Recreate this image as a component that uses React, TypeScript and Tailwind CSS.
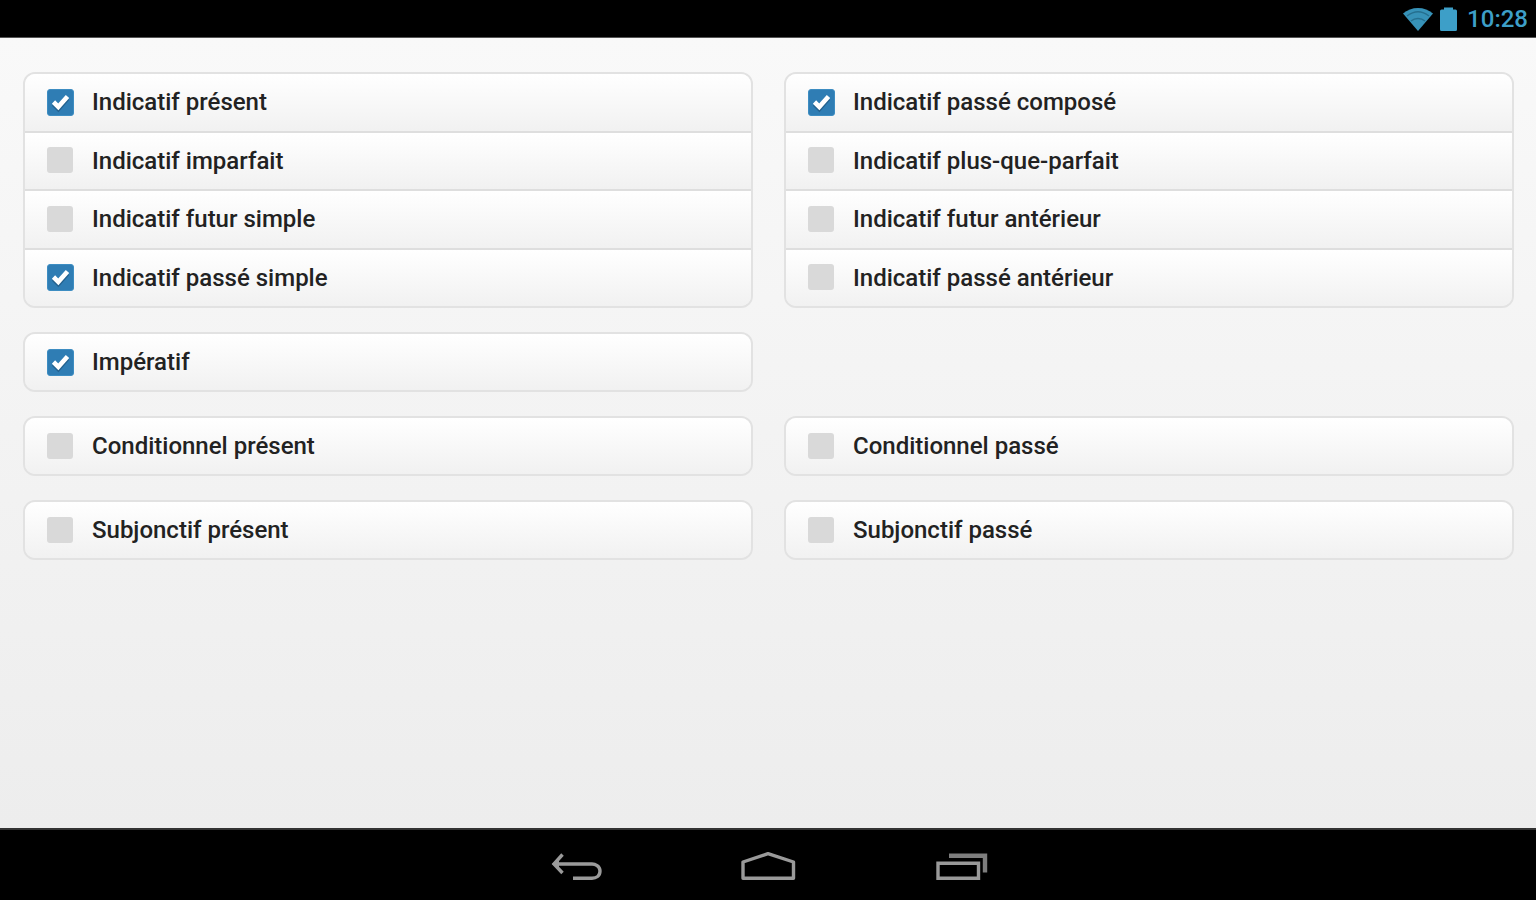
import { useState } from "react";

type Tense = { id: string; label: string };

const rows: (Tense[] | null)[] = [
  [
    { id: "ind-present", label: "Indicatif présent" },
    { id: "ind-imparfait", label: "Indicatif imparfait" },
    { id: "ind-futur", label: "Indicatif futur simple" },
    { id: "ind-passe-simple", label: "Indicatif passé simple" },
  ],
  [
    { id: "ind-passe-compose", label: "Indicatif passé composé" },
    { id: "ind-plus-que-parfait", label: "Indicatif plus-que-parfait" },
    { id: "ind-futur-anterieur", label: "Indicatif futur antérieur" },
    { id: "ind-passe-anterieur", label: "Indicatif passé antérieur" },
  ],
  [{ id: "imperatif", label: "Impératif" }],
  null,
  [{ id: "cond-present", label: "Conditionnel présent" }],
  [{ id: "cond-passe", label: "Conditionnel passé" }],
  [{ id: "subj-present", label: "Subjonctif présent" }],
  [{ id: "subj-passe", label: "Subjonctif passé" }],
];

const initial = ["ind-present", "ind-passe-simple", "ind-passe-compose", "imperatif"];

function StatusBar() {
  return (
    <header className="flex h-[38px] shrink-0 items-center justify-end border-b border-[#555] bg-black pr-2 text-[#3d9fc8]">
      <svg className="mr-[6px] h-6 w-8" viewBox="0 0 32 24" aria-label="Wi-Fi">
        <path d="M1 6.5C9 -1 23 -1 31 6.5L16 24Z" fill="#3792b8" />
        <path d="M5 9C12 3.5 20 3.5 27 9" fill="none" stroke="#256f8f" strokeWidth="1.5" />
        <path d="M9 14C13 10.5 19 10.5 23 14" fill="none" stroke="#256f8f" strokeWidth="1.5" />
      </svg>
      <svg className="mr-[10px] h-6 w-[17px]" viewBox="0 0 17 24" fill="currentColor" aria-label="Batterie">
        <path d="M4 0.5H13V2.5H15.5Q17 2.5 17 4V22.5Q17 24 15.5 24H1.5Q0 24 0 22.5V4Q0 2.5 1.5 2.5H4Z" />
      </svg>
      <time className="text-[24px] leading-[36px] font-medium">10:28</time>
    </header>
  );
}

function TenseOption({ tense, checked, onToggle }: { tense: Tense; checked: boolean; onToggle: () => void }) {
  return (
    <label
      htmlFor={tense.id}
      className="box-content flex min-h-14 flex-1 cursor-pointer items-center gap-[18px] bg-linear-to-b from-white to-[#f1f1f1] pl-[22px]"
    >
      <span className="grid size-[27px] shrink-0">
        <input
          id={tense.id}
          type="checkbox"
          checked={checked}
          onChange={onToggle}
          className="peer col-start-1 row-start-1 m-0 size-[26px] appearance-none rounded-[3px] bg-[#d9d9d9] checked:size-[27px] checked:border checked:border-[#3d8dc2] checked:bg-[#2f7db4]"
        />
        <svg
          className="pointer-events-none invisible col-start-1 row-start-1 size-[27px] peer-checked:visible"
          viewBox="0 0 27 27"
          fill="none"
          strokeWidth="4.6"
          aria-hidden="true"
        >
          <path d="M6.5 15L11.3 19.8L20.5 9.5" stroke="#1c4f75" strokeOpacity="0.6" />
          <path d="M6.5 13L11.3 17.8L20.5 7.5" stroke="#fff" />
        </svg>
      </span>
      <span className="text-[24px] leading-8 font-medium text-[#222]">{tense.label}</span>
    </label>
  );
}

function NavBar() {
  return (
    <nav className="flex h-[72px] shrink-0 items-center justify-center gap-[136px] border-t-2 border-[#333] bg-black pt-1 text-[#9a9a9a]">
      <button type="button" aria-label="Retour">
        <svg className="h-8 w-14" viewBox="0 0 56 32" fill="none" stroke="currentColor" strokeWidth="3.4">
          <path d="M6 13H44C47 13 52 15 52 20C52 25 48 27.3 44 27.3H25" />
          <path d="M14.5 3.5L6 13L14.5 22" />
          <path d="M4 13L11 7V19Z" fill="currentColor" stroke="none" />
        </svg>
      </button>
      <button type="button" aria-label="Accueil">
        <svg className="h-8 w-14" viewBox="0 0 56 32" fill="none" stroke="currentColor" strokeWidth="3.4">
          <path d="M3 27.3V11L28 2.7L53.5 11V27.3Z" strokeLinejoin="round" />
        </svg>
      </button>
      <button type="button" aria-label="Applications récentes">
        <svg className="h-8 w-14" viewBox="0 0 56 32" fill="none" stroke="currentColor" strokeWidth="3.4">
          <path d="M6 12.3H46.5V27.3H6Z" />
          <path d="M17 4.8H53V21.5" stroke="#7d7d7d" strokeWidth="4.4" />
        </svg>
      </button>
    </nav>
  );
}

export default function App() {
  const [selected, setSelected] = useState<string[]>(initial);
  const toggle = (id: string) =>
    setSelected((s) => (s.includes(id) ? s.filter((x) => x !== id) : [...s, id]));

  return (
    <div className="flex min-h-screen flex-col font-['Roboto',sans-serif]">
      <StatusBar />
      <main className="grid flex-1 grid-cols-2 content-start gap-x-[31px] gap-y-6 bg-linear-to-b from-[#f9f9f9] to-[#ededed] pt-[34px] pr-[22px] pb-6 pl-[23px]">
        {rows.map((group, i) =>
          group ? (
            <div
              key={group[0].id}
              role="group"
              className={`flex min-w-0 flex-col divide-y-2 divide-[#dedede] overflow-hidden rounded-xl border-2 border-[#e2e2e2] ${group.length > 1 ? "min-h-[236px]" : ""}`}
            >
              {group.map((t) => (
                <TenseOption key={t.id} tense={t} checked={selected.includes(t.id)} onToggle={() => toggle(t.id)} />
              ))}
            </div>
          ) : (
            <div key={i} />
          ),
        )}
      </main>
      <NavBar />
    </div>
  );
}
